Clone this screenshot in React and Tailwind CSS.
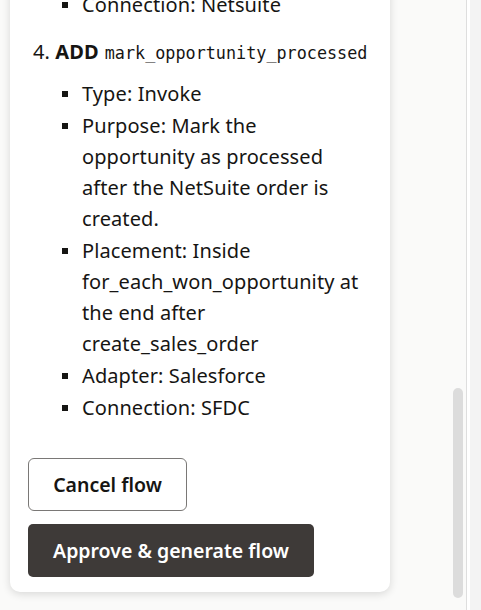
import React from "react";

const Bullet = ({ children }) => (
  <li className="flex">
    <span className="mt-[13px] ml-[29px] mr-[14px] h-[6px] w-[6px] shrink-0 bg-[#161513]" />
    <span className="w-[300px]">{children}</span>
  </li>
);

const App = () => {
  return (
    <div
      className="flex h-[610px] w-[481px] overflow-hidden bg-[#f3f3f3] text-[#161513]"
      style={{ fontFamily: '"Noto Sans", "Open Sans", sans-serif' }}
    >
      <div className="relative flex w-[466px] shrink-0 bg-[#fafaf9]">
        <div className="pl-[10px]">
          <div className="-mt-[11px] w-[380px] rounded-b-[10px] bg-white pb-[15px] pl-[23px] text-[20px] leading-[31px] tracking-[0.1px] shadow-[0_2px_8px_rgba(0,0,0,0.14)]">
            <ul>
              <Bullet>Connection: Netsuite</Bullet>
            </ul>

            <div className="mt-[16px] flex items-baseline">
              <span>4.&nbsp;</span>
              <span className="font-bold">ADD</span>
              <span
                className="ml-[6px] text-[16.8px] tracking-normal"
                style={{ fontFamily: '"DejaVu Sans Mono", monospace' }}
              >
                mark_opportunity_processed
              </span>
            </div>

            <ul className="mt-[9px] flex flex-col gap-[1px]">
              <Bullet>Type: Invoke</Bullet>
              <Bullet>
                Purpose: Mark the
                <br />
                opportunity as processed
                <br />
                after the NetSuite order is
                <br />
                created.
              </Bullet>
              <Bullet>
                Placement: Inside
                <br />
                for_each_won_opportunity at
                <br />
                the end after
                <br />
                create_sales_order
              </Bullet>
              <Bullet>Adapter: Salesforce</Bullet>
              <Bullet>Connection: SFDC</Bullet>
            </ul>

            <div className="mt-[35px] flex flex-col items-start gap-[13px]">
              <button className="-ml-[5px] h-[53px] w-[159px] rounded-[6px] border border-[#7a7876] bg-white text-[19.5px] font-semibold tracking-normal">
                Cancel flow
              </button>
              <button className="-ml-[5px] h-[53px] w-[286px] rounded-[5px] bg-[#3e3a38] text-[19.5px] font-semibold tracking-normal text-white">
                Approve &amp; generate flow
              </button>
            </div>
          </div>
        </div>

        {/* scrollbar thumb */}
        <div className="absolute left-[453px] top-[388px] h-[210px] w-[10px] rounded-full bg-[#dcdcdc]" />
      </div>
      <div className="w-[1px] shrink-0 bg-[#dedede]" />
      <div className="w-[3px] shrink-0 bg-white" />
      <div className="flex-1 bg-[#f3f3f3]" />
    </div>
  );
};

export default App;
